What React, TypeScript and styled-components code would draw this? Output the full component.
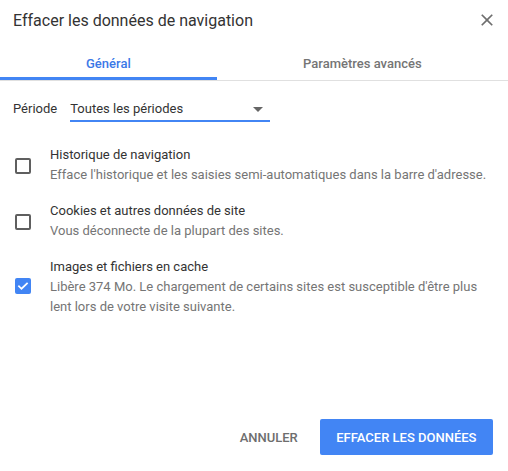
import React from "react";
import styled, { createGlobalStyle } from "styled-components";

const Global = createGlobalStyle`
  html, body { margin: 0; padding: 0; background: #fff; }
  body { font-family: Roboto, "Noto Sans", Arial, sans-serif; -webkit-font-smoothing: antialiased; }
  * { box-sizing: border-box; }
`;

const Dialog = styled.div`
  width: 508px;
  height: 471px;
  display: flex;
  flex-direction: column;
  background: #fff;
`;

const Header = styled.div`
  display: flex;
  justify-content: space-between;
  align-items: flex-start;
  height: 40px;
  padding: 11px 11px 0 13px;
`;

const Title = styled.h1`
  margin: 0;
  font-size: 16px;
  line-height: 20px;
  font-weight: 400;
  color: #333;
`;

const CloseButton = styled.button`
  border: 0;
  background: none;
  padding: 0;
  margin-top: -1px;
  width: 20px;
  height: 20px;
  color: #6e6e6e;
  cursor: pointer;
  display: flex;
  svg { display: block; }
`;

const TabBar = styled.div`
  display: flex;
  height: 41px;
  border-bottom: 1px solid #e0e0e0;
`;

const Tab = styled.div<{ $active?: boolean }>`
  padding: 0 86px;
  display: flex;
  align-items: flex-start;
  justify-content: center;
  padding-top: 14px;
  font-size: 13px;
  line-height: 20px;
  font-weight: 500;
  color: ${(p) => (p.$active ? "#3b78e7" : "#757575")};
  border-bottom: 3px solid ${(p) => (p.$active ? "#4285f4" : "transparent")};
  flex: ${(p) => (p.$active ? "0 0 216px" : "1 1 auto")};
  white-space: nowrap;
`;

const Body = styled.div`
  flex: 1;
  display: flex;
  flex-direction: column;
  padding: 18px 15px 0 13px;
`;

const PeriodRow = styled.div`
  display: flex;
  align-items: flex-start;
  gap: 13px;
  margin-bottom: 23px;
`;

const Label = styled.span`
  font-size: 13px;
  line-height: 20px;
  color: #333;
`;

const Select = styled.div`
  width: 200px;
  display: flex;
  justify-content: space-between;
  align-items: center;
  font-size: 13px;
  line-height: 20px;
  color: #333;
  padding-bottom: 1px;
  border-bottom: 2px solid #4285f4;
  padding-right: 7px;
`;

const Arrow = styled.span`
  width: 0;
  height: 0;
  border-left: 5px solid transparent;
  border-right: 5px solid transparent;
  border-top: 5px solid #666;
  margin-top: 1px;
`;

const Options = styled.div`
  display: flex;
  flex-direction: column;
  gap: 16px;
`;

const Option = styled.label`
  display: flex;
  align-items: center;
  gap: 19px;
  padding-left: 2px;
`;

const Box = styled.span<{ $checked?: boolean }>`
  flex: 0 0 16px;
  width: 16px;
  height: 16px;
  border-radius: 2px;
  border: ${(p) => (p.$checked ? "0" : "2px solid #5f5f5f")};
  background: ${(p) => (p.$checked ? "#4285f4" : "transparent")};
  display: flex;
  align-items: center;
  justify-content: center;
  margin-top: ${(p) => (p.$checked ? "-3px" : "1px")};
`;

const OptionText = styled.div`
  display: flex;
  flex-direction: column;
  font-size: 13px;
  line-height: 20px;
`;

const OptionTitle = styled.span`
  color: #333;
`;

const OptionDesc = styled.span`
  color: #757575;
`;

const Footer = styled.div`
  display: flex;
  justify-content: flex-end;
  align-items: center;
  gap: 8px;
  padding: 0 15px 16px 0;
`;

const Button = styled.button<{ $primary?: boolean }>`
  height: 36px;
  border: 0;
  border-radius: 2px;
  padding: 0 ${(p) => (p.$primary ? "16.5px" : "14px")};
  font-family: Roboto, "Noto Sans", Arial, sans-serif;
  font-size: 13px;
  font-weight: 500;
  text-transform: uppercase;
  background: ${(p) => (p.$primary ? "#4285f4" : "transparent")};
  color: ${(p) => (p.$primary ? "#fff" : "#6e6e6e")};
  cursor: pointer;
`;

type Item = { title: string; desc: string[]; checked?: boolean };

const items: Item[] = [
  {
    title: "Historique de navigation",
    desc: ["Efface l'historique et les saisies semi-automatiques dans la barre d'adresse."],
  },
  { title: "Cookies et autres données de site", desc: ["Vous déconnecte de la plupart des sites."] },
  {
    title: "Images et fichiers en cache",
    desc: [
      "Libère 374 Mo. Le chargement de certains sites est susceptible d'être plus",
      "lent lors de votre visite suivante.",
    ],
    checked: true,
  },
];

export default function App() {
  return (
    <>
      <Global />
      <Dialog>
        <Header>
          <Title>Effacer les données de navigation</Title>
          <CloseButton aria-label="Fermer">
            <svg width="20" height="20" viewBox="0 0 24 24" fill="currentColor">
              <path d="M19 6.41L17.59 5 12 10.59 6.41 5 5 6.41 10.59 12 5 17.59 6.41 19 12 13.41 17.59 19 19 17.59 13.41 12z" />
            </svg>
          </CloseButton>
        </Header>
        <TabBar>
          <Tab $active>Général</Tab>
          <Tab>Paramètres avancés</Tab>
        </TabBar>
        <Body>
          <PeriodRow>
            <Label>Période</Label>
            <Select>
              <span>Toutes les périodes</span>
              <Arrow />
            </Select>
          </PeriodRow>
          <Options>
            {items.map((it) => (
              <Option key={it.title}>
                <Box $checked={it.checked}>
                  {it.checked && (
                    <svg width="12" height="12" viewBox="0 0 24 24" fill="none" stroke="#fff" strokeWidth="3.5" strokeLinecap="square">
                      <path d="M4 12.5l5 5L20 7" />
                    </svg>
                  )}
                </Box>
                <OptionText>
                  <OptionTitle>{it.title}</OptionTitle>
                  {it.desc.map((d) => (
                    <OptionDesc key={d}>{d}</OptionDesc>
                  ))}
                </OptionText>
              </Option>
            ))}
          </Options>
        </Body>
        <Footer>
          <Button>Annuler</Button>
          <Button $primary>Effacer les données</Button>
        </Footer>
      </Dialog>
    </>
  );
}
